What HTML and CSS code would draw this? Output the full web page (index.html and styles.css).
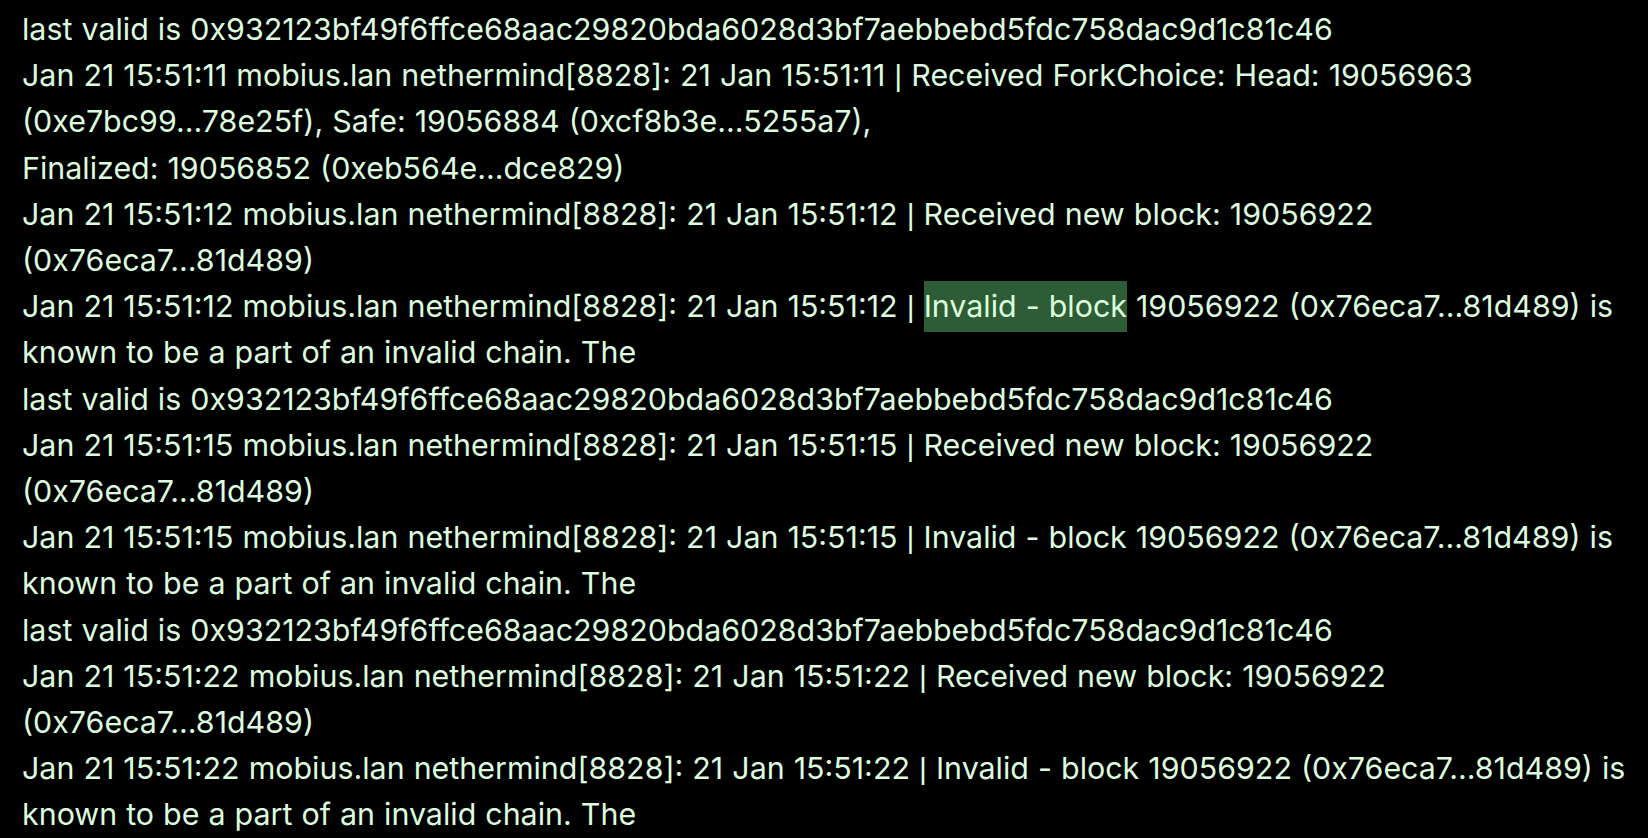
FILE: index.html
```html
<!DOCTYPE html>
<html lang="en">
<head>
  <meta charset="UTF-8">
  <title>nethermind log</title>
  <link rel="stylesheet" href="styles.css">
</head>
<body>
  <div class="log">
    <div class="line">last valid is 0x932123bf49f6ffce68aac29820bda6028d3bf7aebbebd5fdc758dac9d1c81c46</div>
    <div class="line">Jan 21 15:51:11 mobius.lan nethermind[8828]: 21 Jan 15:51:11 <span class="pipe">|</span> Received ForkChoice: Head: 19056963</div>
    <div class="line">(0xe7bc99...78e25f), Safe: 19056884 (0xcf8b3e...5255a7),</div>
    <div class="line">Finalized: 19056852 (0xeb564e...dce829)</div>
    <div class="line">Jan 21 15:51:12 mobius.lan nethermind[8828]: 21 Jan 15:51:12 <span class="pipe">|</span> Received new block: 19056922</div>
    <div class="line">(0x76eca7...81d489)</div>
    <div class="line">Jan 21 15:51:12 mobius.lan nethermind[8828]: 21 Jan 15:51:12 <span class="pipe">|</span> <span class="hl">Invalid - block</span> 19056922 (0x76eca7...81d489) is</div>
    <div class="line">known to be a part of an invalid chain. The</div>
    <div class="line">last valid is 0x932123bf49f6ffce68aac29820bda6028d3bf7aebbebd5fdc758dac9d1c81c46</div>
    <div class="line">Jan 21 15:51:15 mobius.lan nethermind[8828]: 21 Jan 15:51:15 <span class="pipe">|</span> Received new block: 19056922</div>
    <div class="line">(0x76eca7...81d489)</div>
    <div class="line">Jan 21 15:51:15 mobius.lan nethermind[8828]: 21 Jan 15:51:15 <span class="pipe">|</span> Invalid - block 19056922 (0x76eca7...81d489) is</div>
    <div class="line">known to be a part of an invalid chain. The</div>
    <div class="line">last valid is 0x932123bf49f6ffce68aac29820bda6028d3bf7aebbebd5fdc758dac9d1c81c46</div>
    <div class="line">Jan 21 15:51:22 mobius.lan nethermind[8828]: 21 Jan 15:51:22 <span class="pipe">|</span> Received new block: 19056922</div>
    <div class="line">(0x76eca7...81d489)</div>
    <div class="line">Jan 21 15:51:22 mobius.lan nethermind[8828]: 21 Jan 15:51:22 <span class="pipe">|</span> Invalid - block 19056922 (0x76eca7...81d489) is</div>
    <div class="line">known to be a part of an invalid chain. The</div>
  </div>
</body>
</html>
```

FILE: styles.css
```css
html, body {
  margin: 0;
  padding: 0;
  background-color: #000;
  height: 100%;
  overflow: hidden;
}

.log {
  padding: 6px 0 0 22px;
  font-family: Inter, 'Liberation Sans', sans-serif;
  font-size: 30.4px;
  line-height: 46.2px;
  word-spacing: 0.5px;
  color: #ddfbdf;
}

.line {
  white-space: nowrap;
}

/* the source font has a shorter bar */
.pipe {
  font-family: 'Liberation Sans', sans-serif;
}

.hl {
  background-color: #2e5c36;
  color: #dcffdc;
  padding: 7px 0 8px;
}
```
